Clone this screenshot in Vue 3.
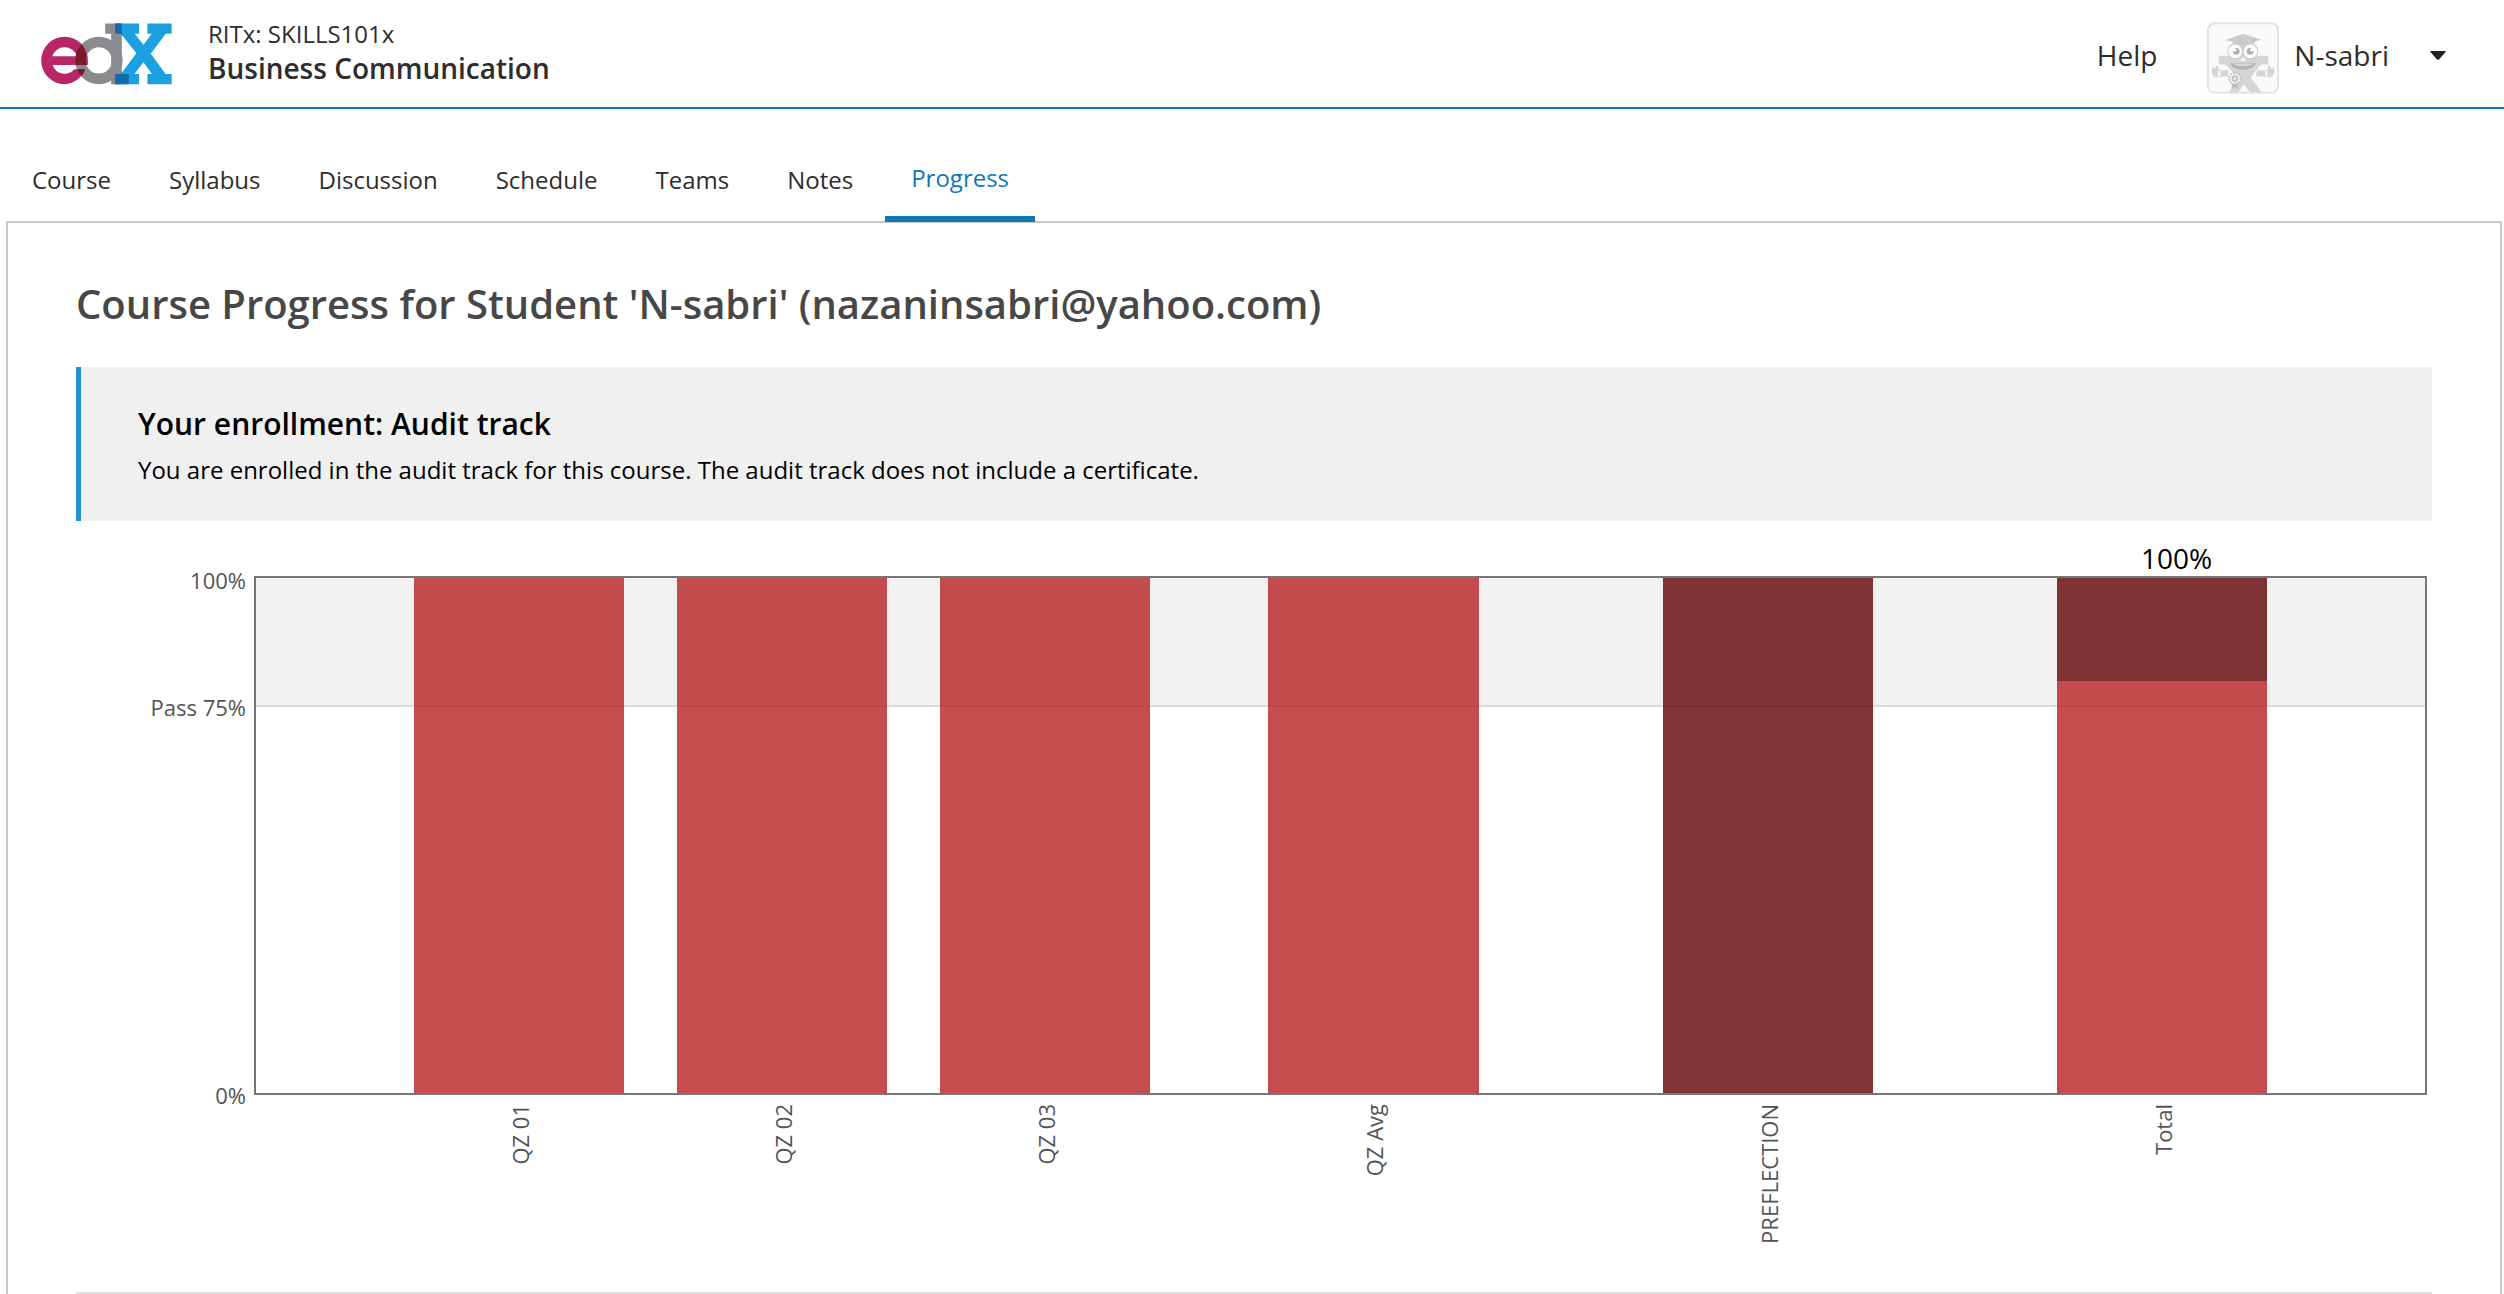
<script setup>
const tabs = [
  { name: 'Course' },
  { name: 'Syllabus' },
  { name: 'Discussion' },
  { name: 'Schedule' },
  { name: 'Teams' },
  { name: 'Notes' },
  { name: 'Progress', active: true },
]

const yTicks = ['100%', 'Pass 75%', '0%']

const bars = [
  { label: 'QZ 01', slot: 'c1', parts: [{ kind: 'quiz', value: 100 }] },
  { label: 'QZ 02', slot: 'c2', parts: [{ kind: 'quiz', value: 100 }] },
  { label: 'QZ 03', slot: 'c3', parts: [{ kind: 'quiz', value: 100 }] },
  { label: 'QZ Avg', slot: 'c4', parts: [{ kind: 'quiz', value: 100 }] },
  { label: 'PREFLECTION', slot: 'c5', parts: [{ kind: 'reflection', value: 100 }] },
  {
    label: 'Total',
    slot: 'c6',
    note: '100%',
    parts: [{ kind: 'reflection', value: 20 }, { kind: 'quiz', value: 80 }],
  },
]
</script>

<template>
  <div class="page">
    <header class="header">
      <a class="logo" href="#" aria-label="edX home">
        <svg viewBox="33 40 394 186" width="131" height="62" aria-hidden="true">
          <g fill="#8a8b8f">
            <path fill-rule="evenodd" d="M207 81a71 71 0 1 0 0 143a71 71 0 1 0 0-143zM207 113a39 39 0 1 1 0 79a39 39 0 1 1 0-79z" />
            <path d="M226 41h50v183h-32V72h-18z" />
          </g>
          <path fill="#b72667" d="M104 81a70 71 0 0 1 70 71v14H68a38 38 0 0 0 65 13h33a71 71 0 0 1-62 45a70 71 0 1 1 0-143zM104 113a38 38 0 0 0-37 27h74a38 38 0 0 0-37-27z" />
          <path fill="#771b2c" d="M155 104A71 71 0 0 1 169 140q-3 13 0 26H138A71 71 0 0 1 155 104z" />
          <path fill="#771b2c" d="M142 179h24q-4 11-11 21q-9-10-13-21z" />
          <path fill="#1ba1e2" d="M256 41h72v31h-13l26 33 25-33h-13V41h73v31h-18l-45 60 45 61h18v31h-73v-31h14l-26-35-27 35h14v31h-72v-31h17l47-62-47-59h-17z" />
          <path fill="#106da8" d="M256 41h20v31h-20zM256 193h41v31h-41zM273 72l3 4v-4zM273 193l3-4v4z" />
        </svg>
      </a>
      <div class="course-title">
        <span class="course-code">RITx: SKILLS101x</span>
        <span class="course-name">Business Communication</span>
      </div>
      <div class="account">
        <a class="help" href="#">Help</a>
        <button class="user" type="button" aria-haspopup="true">
          <svg class="avatar" viewBox="22 18 214 212" width="72" height="72" aria-hidden="true">
            <rect x="25" y="21" width="208" height="206" rx="20" fill="#fafafa" stroke="#e4e4e4" stroke-width="6" />
            <g fill="#d5d5d5">
              <path d="M57 117h147v26h-22l-30 38 32 45h-34l-19-24-16 24H88l24-45-34-38H57z" />
              <path d="M100 74h60v60h-60z" />
              <path d="M62 160v22l-20-2-6-14 2-12 5-3 4 7 2-11 6 1 1 10zM84 160l-30 2v18l32-2zM196 160v22l20-2 7-14-3-12-5-3-3 7-3-11-6 1-1 10zM170 160l32 2v18l-34-2z" />
            </g>
            <path fill="#cbcbcb" d="M76 71l54-19 53 18-22 6v9h-62v-9z" />
            <path d="M163 66v12" stroke="#bcbcbc" stroke-width="4" />
            <g fill="#fcfcfc" stroke="#c6c6c6" stroke-width="3">
              <circle cx="106" cy="104" r="22" />
              <circle cx="151" cy="104" r="22" />
            </g>
            <g fill="#b0b0b0">
              <circle cx="109" cy="104" r="10" />
              <circle cx="150" cy="104" r="10" />
            </g>
            <circle cx="104" cy="100" r="5" fill="#fff" />
            <circle cx="155" cy="100" r="5" fill="#fff" />
            <path fill="#f4f4f4" d="M129 121l11 12h-22z" />
            <path fill="#b4b4b4" d="M90 139h78q-8 20-39 20t-39-20z" />
            <path fill="#d8d8d8" d="M98 140h62q-10 8-31 8t-31-8z" />
            <path fill="#bdbdbd" d="M96 196h19l-1 20-9-6-9 6z" />
            <circle cx="105" cy="185" r="17" fill="#f5f5f5" stroke="#c0c0c0" stroke-width="5" stroke-dasharray="6 3" />
            <circle cx="105" cy="185" r="8" fill="#e2e2e2" stroke="#bcbcbc" stroke-width="4" />
          </svg>
          <span class="user-name">N-sabri</span>
          <svg class="caret" viewBox="0 0 16 9" width="16" height="9" aria-hidden="true">
            <path fill="#222" d="M1 0h14q1 0 .6 1L9 8.500q-1 .5-2 0L.4 1Q0 0 1 0z" />
          </svg>
        </button>
      </div>
    </header>

    <nav class="tabs" aria-label="Course">
      <a
        v-for="tab in tabs"
        :key="tab.name"
        href="#"
        :class="['tab', { active: tab.active }]"
        :aria-current="tab.active ? 'page' : undefined"
      >{{ tab.name }}</a>
    </nav>

    <main class="panel">
      <h1>Course Progress for Student 'N-sabri' (nazaninsabri@yahoo.com)</h1>

      <section class="enrollment">
        <h2>Your enrollment: Audit track</h2>
        <p>You are enrolled in the audit track for this course. The audit track does not include a certificate.</p>
      </section>

      <section class="chart" aria-label="Grade chart">
        <div class="y-axis">
          <span v-for="tick in yTicks" :key="tick">{{ tick }}</span>
        </div>
        <div class="plot">
          <div class="pass-band"></div>
          <div class="bars columns">
            <div v-for="bar in bars" :key="bar.label" :class="['bar', bar.slot]">
              <span v-if="bar.note" class="note">{{ bar.note }}</span>
              <div
                v-for="part in bar.parts"
                :key="part.kind"
                :class="part.kind"
                :style="{ height: part.value + '%' }"
              ></div>
            </div>
          </div>
        </div>
        <div class="x-axis columns">
          <span v-for="bar in bars" :key="bar.label" :class="['x-label', bar.slot]">{{ bar.label }}</span>
        </div>
      </section>
      <hr />
    </main>
  </div>
</template>

<style>
body {
  margin: 0;
  background: #fff;
}
html {
  overflow: hidden;
}
</style>

<style scoped>
.page {
  font-family: "Open Sans", sans-serif;
  color: #2d2d2d;
}
a {
  color: inherit;
  text-decoration: none;
}
.header {
  display: flex;
  align-items: flex-start;
  height: 107px;
  padding: 0 58px 0 41px;
  border-bottom: 2px solid #1077b5;
  box-shadow: 0 1px 5px rgba(0, 0, 0, 0.06);
}
.logo {
  display: flex;
  margin-top: 23px;
}
.course-title {
  display: flex;
  flex-direction: column;
  margin: 16px 0 0 36px;
  line-height: 35px;
}
.course-code {
  font-size: 24px;
}
.course-name {
  font-size: 28px;
  font-weight: 600;
}
.account {
  display: flex;
  align-items: flex-start;
  gap: 50px;
  margin-left: auto;
  padding-top: 22px;
  font-size: 28px;
}
.help,
.user-name {
  line-height: 66px;
}
.user {
  display: flex;
  align-items: flex-start;
  padding: 0;
  border: 0;
  background: none;
  font: inherit;
  color: inherit;
}
.user-name {
  margin-left: 15px;
}
.caret {
  margin: 29px 0 0 41px;
}
.tabs {
  position: relative;
  z-index: 1;
  display: flex;
  align-items: flex-end;
  gap: 6px;
  padding: 53px 6px 0;
}
.tab {
  padding: 0 26px 26px;
  font-size: 24px;
  line-height: 32px;
}
.tab.active {
  padding-bottom: 22px;
  border-bottom: 6px solid #1077b5;
  color: #1077b5;
}
.panel {
  margin: -1px 2px 0 6px;
  padding: 53px 68px 0;
  border: 2px solid #c8c8c8;
}
h1 {
  margin: 0 0 35px;
  font-size: 40px;
  font-weight: 600;
  line-height: 56px;
  color: #474747;
}
.enrollment {
  padding: 36px 57px 35px;
  border-left: 5px solid #2291c7;
  background: #f0f0f0;
  color: #000;
}
h2 {
  margin: 0 0 9px;
  font-size: 30px;
  font-weight: 600;
  line-height: 42px;
}
p {
  margin: 0;
  font-size: 24px;
  line-height: 32px;
}
.chart {
  display: grid;
  grid-template-columns: 178px 1fr;
  padding: 55px 5px 48px 0;
  font-size: 22px;
  line-height: 30px;
  color: #545454;
}
.y-axis {
  display: grid;
  grid-template-rows: 127px 1fr 30px;
  margin: -11px 0 -15px;
  padding-right: 8px;
  text-align: right;
}
.plot {
  display: grid;
  grid-template-rows: 515px;
  border: 2px solid #767676;
}
.pass-band {
  grid-area: 1 / 1;
  box-sizing: border-box;
  height: 25%;
  border-bottom: 2px solid #dcdcdc;
  background: #f2f2f2;
}
.columns {
  display: grid;
  grid-template-columns: 60fr 80fr 20fr 80fr 20fr 80fr 45fr 80fr 70fr 80fr 70fr 80fr 60fr;
}
.bars {
  grid-area: 1 / 1;
  grid-template-rows: 100%;
}
.c1 { grid-column: 2; }
.c2 { grid-column: 4; }
.c3 { grid-column: 6; }
.c4 { grid-column: 8; }
.c5 { grid-column: 10; }
.c6 { grid-column: 12; }
.bar {
  position: relative;
}
.quiz {
  background: rgba(183, 33, 36, 0.8);
}
.reflection {
  background: rgba(96, 1, 4, 0.8);
}
.note {
  position: absolute;
  bottom: 100%;
  left: 40%;
  font-size: 28px;
  line-height: 40px;
  color: #000;
}
.x-axis {
  grid-column: 2;
  min-height: 140px;
  padding: 9px 2px 0;
}
.x-label {
  grid-row: 1;
  justify-self: center;
  align-self: start;
  padding-right: 2px;
  writing-mode: vertical-rl;
  transform: rotate(180deg);
  white-space: nowrap;
}
hr {
  height: 2px;
  margin: 0;
  border: 0;
  background: #e1e1e1;
}
</style>
